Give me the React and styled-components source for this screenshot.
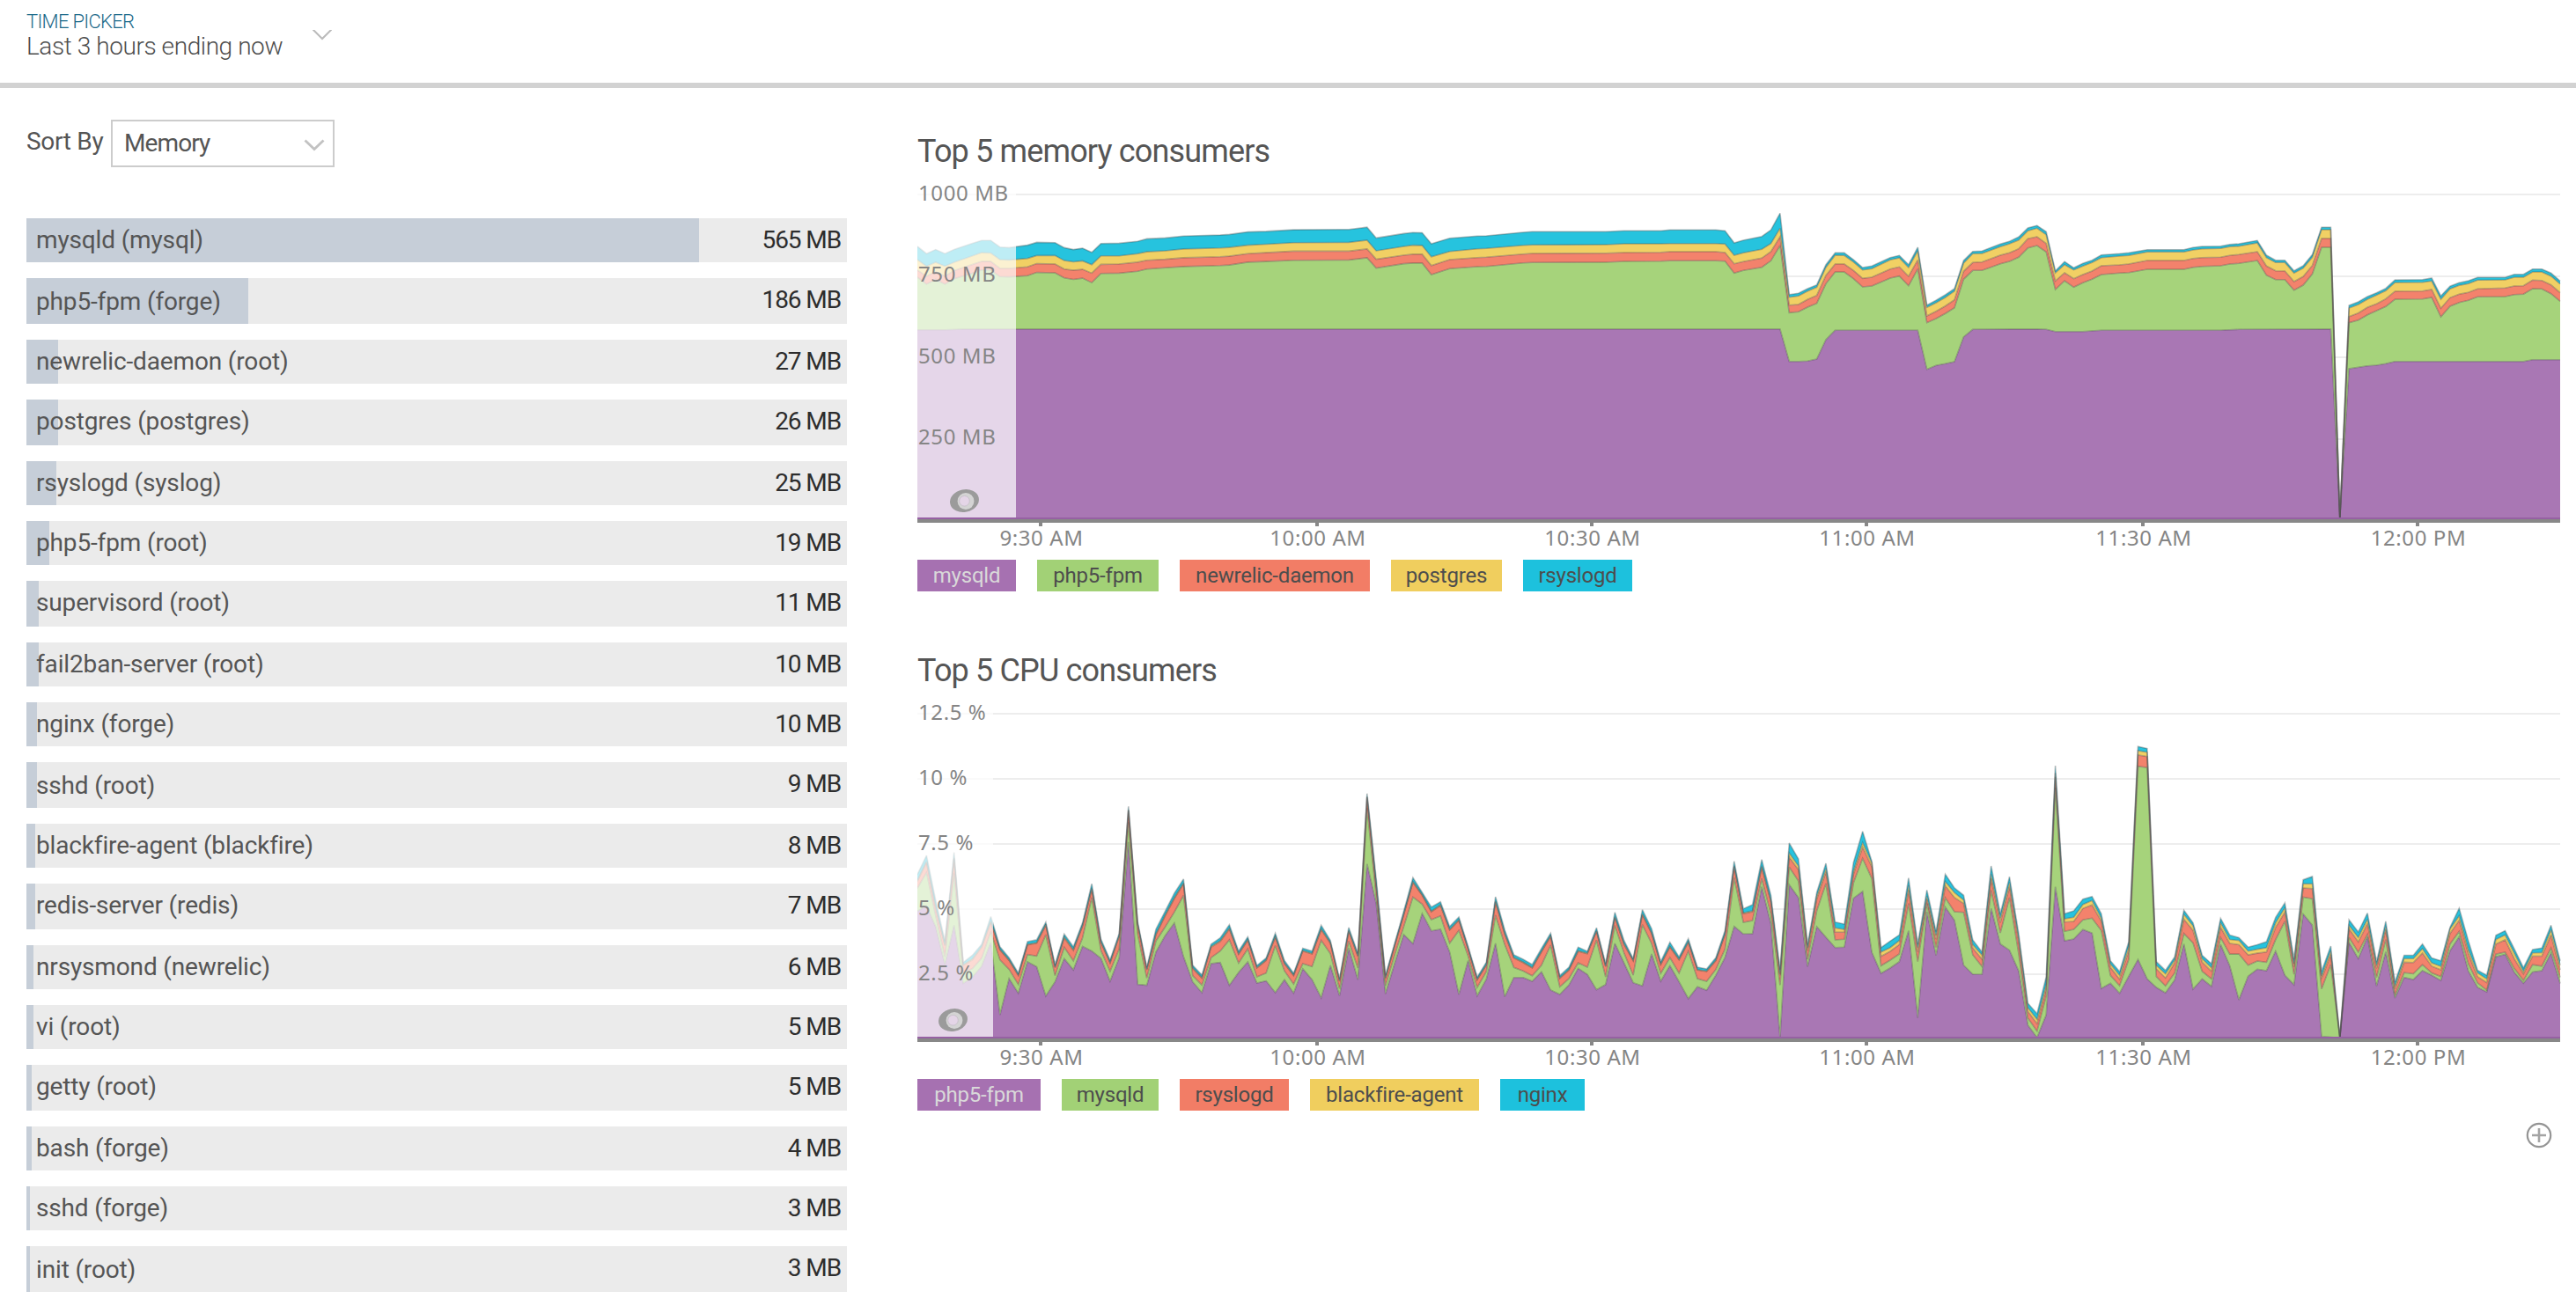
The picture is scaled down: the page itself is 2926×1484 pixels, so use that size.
import React from 'react';
import styled, { createGlobalStyle } from 'styled-components';

const GlobalStyle = createGlobalStyle`
  html, body { margin: 0; padding: 0; background: #fff; }
  body { font-family: Roboto, "Liberation Sans", sans-serif; color: #555; overflow: hidden; }
  * { box-sizing: border-box; }
`;

const Page = styled.div`
  width: 2926px;
  height: 1484px;
  background: #fff;
  display: flex;
  flex-direction: column;
`;

const Header = styled.header`
  height: 100px;
  border-bottom: 6px solid #d2d2d2;
  padding: 12px 30px 0;
  display: flex;
  align-items: flex-start;
  flex: none;
`;

const Picker = styled.div`
  width: 325px;
  font-weight: 300;
`;

const PickerTitle = styled.div`
  font-size: 22px;
  line-height: 25px;
  letter-spacing: -0.7px;
  color: #1c6a8a;
`;

const PickerValue = styled.div`
  font-size: 28px;
  line-height: 31px;
  letter-spacing: -0.42px;
  color: #4d4d4d;
`;

const PickerArrow = styled.svg`
  width: 22px;
  height: 12px;
  margin-top: 22px;
`;

const Body = styled.main`
  display: flex;
  flex: 1;
  padding-left: 30px;
`;

const Sidebar = styled.section`
  width: 932px;
  margin-right: 80px;
  padding-top: 36px;
`;

const SortBar = styled.div`
  display: flex;
  height: 54px;
  margin-bottom: 58px;
  font-size: 28px;
  line-height: 49px;
`;

const SortLabel = styled.label`
  width: 96px;
  letter-spacing: -0.3px;
`;

const Select = styled.div`
  width: 254px;
  height: 54px;
  border: 2px solid #ccc;
  display: flex;
  justify-content: space-between;
  padding: 0 9px 0 13px;
  letter-spacing: -0.9px;
`;

const SelectArrow = styled.svg`
  width: 24px;
  height: 14px;
  margin-top: 20px;
  overflow: visible;
`;

const Row = styled.div`
  height: ${(p) => p.$height}px;
  margin-bottom: ${(p) => p.$gap}px;
  padding: 0 7px 0 11px;
  display: flex;
  justify-content: space-between;
  font-size: 28px;
  line-height: 49px;
  white-space: nowrap;
  background: linear-gradient(#c6ced8, #c6ced8) 0 0 / ${(p) => p.$fill}px 100% no-repeat #ebebeb;
`;

const RowName = styled.span`
  letter-spacing: -0.15px;
  padding-top: ${(p) => p.$drop}px;
`;

const RowValue = styled.span`
  color: #2d2d2d;
  letter-spacing: -1.1px;
`;

const Charts = styled.section`
  width: 1868px;
  padding-top: 50px;
`;

const ChartBlock = styled.article`
  margin-bottom: 68px;
`;

const ChartTitle = styled.h2`
  margin: 0 0 6px;
  font-weight: 400;
  font-size: 36px;
  line-height: 44px;
  letter-spacing: -0.85px;
`;

const Plot = styled.svg`
  display: block;
  width: 1868px;
  height: 430px;
  margin-bottom: 6px;
  text {
    font-family: "Noto Sans", "Open Sans", sans-serif;
    font-size: 24px;
    letter-spacing: 0.6px;
    fill: #858585;
  }
`;

const Legend = styled.div`
  display: flex;
  gap: 24px;
`;

const LegendItem = styled.span`
  width: ${(p) => p.$width}px;
  height: 36px;
  background: ${(p) => p.$color};
  color: ${(p) => (p.$light ? '#d9d9d9' : '#4d4d4d')};
  font-size: 24px;
  line-height: 36px;
  letter-spacing: -0.2px;
  text-align: center;
  white-space: nowrap;
`;

const AddBar = styled.div`
  display: flex;
  justify-content: flex-end;
  padding-right: 11px;
  margin-top: -55px;
`;

const AddIcon = styled.svg`
  width: 30px;
  height: 30px;
`;

const processes = [
  ['mysqld (mysql)', '565 MB', 764],
  ['php5-fpm (forge)', '186 MB', 252],
  ['newrelic-daemon (root)', '27 MB', 36],
  ['postgres (postgres)', '26 MB', 36],
  ['rsyslogd (syslog)', '25 MB', 34],
  ['php5-fpm (root)', '19 MB', 26],
  ['supervisord (root)', '11 MB', 14],
  ['fail2ban-server (root)', '10 MB', 14],
  ['nginx (forge)', '10 MB', 12],
  ['sshd (root)', '9 MB', 12],
  ['blackfire-agent (blackfire)', '8 MB', 10],
  ['redis-server (redis)', '7 MB', 10],
  ['nrsysmond (newrelic)', '6 MB', 8],
  ['vi (root)', '5 MB', 8],
  ['getty (root)', '5 MB', 6],
  ['bash (forge)', '4 MB', 6],
  ['sshd (forge)', '3 MB', 4],
  ['init (root)', '3 MB', 4],
];

// Rows repeat every 34.375 units and snap to whole units, two pixels each.
const PITCH = 34.375;
const snap = (v) => Math.round(v) * 2;

const COLORS = ['#a671b1', '#a2d176', '#f27d66', '#f0ce5e', '#1dc1dd'];
const LAST = 179;
const STEP = 1866 / LAST;
const ZERO = 391;
const PLOT = 370;

// Each segment lists stacked tops measured down from a local origin:
// `zero` is the baseline and `full` the height of the whole scale.
const cpuSegments = [
  {
    zero: 1262.8, full: 1036,
    rows: [
      [855, 782, 760, 757, 738], [838, 732, 700, 697, 678], [905, 870, 845, 842, 820], [1025, 1000, 965, 962, 950],
      [900, 735, 690, 686, 668], [1085, 1050, 1027, 1025, 1018], [1065, 1038, 1010, 1007, 995], [1030, 1005, 970, 967, 960],
      [955, 920, 890, 887, 872], [1185, 1010, 978, 976, 968], [1070, 1040, 1012, 1010, 1003], [1116, 1088, 1060, 1058, 1052],
      [1016, 993, 962, 960, 952], [1032, 998, 957, 955, 946], [1125, 930, 900, 897, 890], [1080, 1060, 1035, 1033, 1025],
      [1006, 970, 940, 937, 928], [1042, 1013, 980, 977, 968], [967, 940, 903, 900, 892], [982, 812, 785, 782, 768],
      [1005, 980, 955, 952, 944], [1078, 1046, 1020, 1018, 1010], [1003, 975, 935, 932, 925], [635, 572, 535, 532, 522],
      [1088, 928, 898, 895, 888], [1091, 1068, 1042, 1040, 1033], [985, 950, 930, 927, 912], [933, 905, 870, 867, 855],
      [893, 858, 815, 812, 798], [1000, 805, 768, 765, 753], [1080, 1060, 1037, 1035, 1027], [1114, 1090, 1068, 1066, 1058],
      [1022, 1003, 970, 967, 960], [1018, 982, 952, 949, 940], [1091, 946, 912, 909, 898], [1050, 1020, 992, 990, 982],
      [1016, 975, 947, 945, 937], [1084, 1064, 1036, 1034, 1028], [1077, 1052, 1012, 1010, 1004], [1114, 965, 938, 935, 925],
      [1073, 1045, 1022, 1020, 1012], [1116, 1087, 1060, 1058, 1052], [1038, 1022, 982, 980, 973], [1073, 1031, 991, 989, 982],
      [1131, 948, 914, 911, 900], [1028, 990, 957, 955, 948],
    ],
  },
  {
    zero: 1203, full: 1110,
    rows: [
      [1054, 1030, 1005, 1003, 997], [892, 868, 835, 832, 822], [1000, 960, 920, 918, 910], [605, 415, 378, 375, 365],
      [740, 715, 680, 677, 655], [1048, 1020, 995, 993, 985], [945, 915, 885, 883, 876], [846, 818, 778, 776, 766],
      [877, 718, 668, 665, 652], [774, 742, 712, 710, 702], [833, 795, 768, 766, 752], [828, 782, 747, 744, 734],
      [905, 875, 830, 828, 818], [1050, 832, 797, 795, 786], [935, 918, 895, 893, 885], [1055, 1026, 1000, 998, 991],
      [998, 972, 950, 948, 940], [876, 780, 735, 732, 717], [1058, 880, 845, 842, 830], [992, 958, 926, 924, 915],
      [992, 970, 941, 939, 930], [1005, 986, 960, 958, 948], [973, 950, 905, 903, 893], [1035, 882, 852, 850, 841],
      [1050, 1024, 995, 993, 986], [1018, 996, 967, 965, 957], [961, 942, 903, 901, 889], [982, 957, 911, 909, 903],
      [1034, 865, 835, 833, 823], [1016, 990, 955, 953, 945], [876, 815, 788, 785, 770], [943, 908, 880, 877, 866],
      [1010, 984, 935, 934, 928], [1021, 812, 778, 775, 761], [912, 876, 842, 840, 826], [1005, 978, 948, 946, 938],
      [952, 924, 888, 886, 872], [1007, 977, 932, 930, 922], [1064, 902, 872, 870, 860], [1024, 996, 967, 965, 957],
      [1036, 1005, 972, 970, 963], [985, 965, 935, 933, 925], [924, 895, 845, 843, 832], [818, 652, 615, 612, 596],
      [844, 804, 775, 772, 758], [843, 798, 768, 765, 744], [683, 655, 616, 612, 590], [810, 775, 735, 730, 712],
      [1197, 1018, 985, 980, 965], [676, 616, 582, 568, 534], [720, 663, 625, 612, 588], [955, 930, 900, 892, 880],
      [819, 765, 725, 715, 702], [855, 672, 632, 620, 603], [890, 864, 838, 823, 803], [889, 862, 838, 828, 810],
      [722, 670, 640, 630, 600], [699, 586, 548, 532, 494], [907, 655, 615, 602, 597], [978, 952, 920, 905, 890],
      [960, 933, 903, 890, 868], [938, 912, 880, 866, 847], [833, 740, 695, 678, 653], [1130, 938, 905, 890, 878],
      [768, 740, 725, 715, 694], [917, 890, 862, 848, 835], [752, 720, 680, 665, 640], [797, 768, 720, 703, 687],
      [950, 770, 740, 728, 712], [981, 915, 892, 880, 864], [982, 955, 930, 916, 905], [757, 695, 655, 640, 612],
      [878, 840, 805, 790, 775], [899, 720, 683, 668, 649], [970, 910, 872, 858, 842], [1155, 1130, 1108, 1095, 1080],
      [1197, 1175, 1150, 1135, 1115], [1120, 1055, 1030, 1015, 990], [683, 345, 308, 295, 270], [867, 835, 803, 792, 775],
      [861, 828, 801, 787, 765], [829, 796, 757, 743, 725], [841, 790, 745, 730, 716], [1030, 832, 800, 790, 775],
      [1012, 985, 958, 946, 935], [1046, 1020, 998, 985, 972], [988, 930, 900, 885, 870], [931, 272, 234, 219, 205],
    ],
  },
  {
    zero: 1164.4, full: 1074.5,
    rows: [
      [965, 268, 231, 217, 205], [993, 957, 932, 920, 908], [1011, 988, 962, 948, 937], [968, 945, 912, 902, 892],
      [850, 815, 768, 752, 738], [999, 846, 805, 790, 780], [965, 940, 910, 898, 887], [990, 965, 940, 928, 915],
      [852, 828, 795, 780, 765], [922, 883, 848, 835, 820], [1034, 883, 852, 838, 829], [956, 920, 886, 873, 860],
      [933, 906, 880, 867, 852], [938, 910, 876, 862, 842], [873, 835, 795, 780, 762], [953, 775, 745, 730, 714],
      [984, 950, 925, 915, 900], [751, 695, 665, 651, 638], [788, 700, 667, 651, 627], [1155, 998, 965, 955, 940],
      [1157, 918, 885, 872, 857], [1160, 1160, 1159, 1158, 1156], [845, 828, 800, 788, 770], [898, 877, 843, 828, 810],
      [827, 818, 783, 768, 748], [988, 960, 930, 920, 908], [876, 835, 803, 792, 775], [1028, 1018, 998, 988, 975],
      [960, 944, 910, 898, 887], [967, 948, 911, 898, 887], [938, 918, 880, 865, 850], [953, 945, 923, 912, 896],
      [970, 957, 935, 923, 905], [872, 850, 815, 800, 795], [826, 808, 772, 757, 732], [940, 915, 882, 868, 840],
      [993, 978, 958, 945, 936], [1008, 1002, 977, 965, 953], [892, 883, 850, 835, 821], [884, 877, 836, 820, 806],
      [943, 930, 898, 880, 866], [979, 970, 948, 940, 928], [942, 918, 890, 879, 868], [938, 923, 890, 878, 863],
      [880, 863, 820, 803, 788], [980, 960, 935, 920, 905],
    ],
  },
];

const cpuTops = cpuSegments.flatMap(({ zero, full, rows }) =>
  rows.map((row) => row.map((v) => ZERO - ((zero - v) / full) * PLOT)),
);

// Memory samples are sparse: [sample, rsyslogd, postgres, newrelic-daemon, php5-fpm].
const memorySegments = [
  {
    zero: 1290.8, full: 1036,
    rows: [
      [0, 420, 462, 495, 518], [1, 443, 483, 515, 540], [2, 430, 470, 500, 525], [3, 443, 483, 515, 540], [4, 430, 470, 497, 523],
      [6, 410, 450, 477, 505], [7, 401, 440, 468, 495], [8, 401, 441, 468, 495], [9, 422, 462, 490, 516], [10, 424, 463, 490, 517],
      [12, 416, 458, 485, 513], [13, 407, 449, 475, 503], [15, 408, 449, 476, 504], [16, 424, 465, 492, 520], [17, 430, 469, 496, 525],
      [18, 426, 466, 493, 521], [19, 439, 478, 505, 535], [20, 411, 450, 477, 506], [22, 410, 450, 476, 505], [24, 404, 443, 470, 499],
      [25, 396, 437, 464, 492], [27, 393, 434, 461, 488], [29, 387, 428, 456, 484], [33, 384, 425, 453, 481], [34, 382, 423, 451, 479],
      [36, 374, 416, 443, 470], [38, 372, 413, 440, 468], [41, 367, 408, 435, 464], [47, 366, 407, 435, 463], [49, 359, 400, 428, 456],
      [50, 393, 434, 461, 489], [53, 379, 420, 448, 475], [54, 376, 416, 445, 473], [55, 377, 417, 445, 473], [56, 412, 453, 481, 510],
    ],
  },
  {
    zero: 1173, full: 1110,
    rows: [
      [58, 212, 257, 285, 316], [61, 205, 248, 278, 309], [62, 204, 247, 277, 308], [66, 192, 236, 266, 296], [67, 190, 235, 264, 295],
      [75, 190, 234, 263, 294], [77, 187, 231, 261, 291], [81, 187, 231, 260, 290], [82, 184, 230, 258, 289], [87, 184, 230, 258, 289],
      [88, 187, 232, 261, 290], [89, 228, 270, 299, 331], [90, 219, 262, 292, 322], [92, 206, 250, 280, 311], [93, 184, 230, 258, 289],
      [94, 127, 178, 207, 237], [95, 404, 413, 440, 466], [96, 400, 409, 438, 463], [97, 384, 392, 421, 447], [98, 371, 379, 407, 434],
      [99, 302, 311, 339, 367], [100, 262, 270, 300, 327], [101, 262, 271, 300, 327], [102, 285, 293, 322, 350], [103, 312, 320, 349, 378],
      [104, 307, 316, 345, 375], [106, 278, 286, 317, 348], [107, 271, 279, 310, 341], [108, 302, 312, 342, 374], [109, 243, 255, 286, 317],
      [110, 440, 448, 477, 500], [111, 424, 432, 461, 486], [112, 405, 414, 443, 469], [113, 384, 392, 422, 449], [114, 288, 297, 325, 352],
      [115, 257, 265, 295, 322], [116, 256, 264, 293, 322], [118, 232, 241, 270, 299], [119, 223, 231, 262, 291], [120, 208, 218, 248, 277],
      [121, 177, 187, 214, 245], [122, 169, 178, 207, 237], [123, 190, 200, 230, 259], [124, 323, 330, 358, 387], [125, 292, 302, 330, 357],
      [126, 313, 320, 350, 379], [127, 298, 307, 336, 364], [128, 287, 295, 324, 352], [129, 269, 278, 306, 336], [131, 265, 273, 303, 331],
      [132, 262, 271, 300, 329], [134, 251, 259, 288, 318], [138, 251, 259, 288, 318], [139, 244, 252, 281, 311], [140, 240, 248, 278, 308],
      [142, 239, 247, 277, 306], [143, 233, 241, 271, 300], [144, 231, 239, 268, 298], [146, 220, 228, 258, 288], [147, 270, 278, 307, 338],
      [148, 287, 295, 323, 353], [149, 287, 295, 324, 353], [150, 323, 331, 360, 389], [151, 306, 314, 343, 372], [152, 268, 277, 305, 334],
      [153, 175, 183, 213, 243], [154, 175, 183, 213, 243], [155, 1168, 1168, 1168, 1168], [156, 441, 450, 479, 500], [157, 429, 438, 467, 491],
      [158, 411, 420, 448, 473], [159, 398, 406, 436, 459], [160, 383, 391, 419, 445], [161, 354, 363, 393, 420], [164, 353, 362, 392, 419],
      [165, 348, 358, 387, 414], [166, 409, 420, 451, 480], [167, 376, 385, 415, 444], [168, 364, 373, 403, 431], [169, 357, 367, 397, 424],
      [170, 346, 355, 385, 412], [173, 346, 354, 382, 411], [174, 335, 345, 375, 404], [175, 335, 345, 374, 403], [176, 317, 327, 355, 384],
      [177, 317, 327, 356, 385], [178, 331, 341, 371, 401], [179, 358, 368, 398, 427],
    ],
  },
];

const mysqlMemory = [
  [0, 524], [3, 524], [5, 522], [94, 522], [95, 632], [96, 632], [97, 631], [98, 624], [99, 558], [100, 526], [109, 526],
  [110, 659], [111, 646], [112, 640], [113, 633], [114, 549], [115, 523], [122, 522], [123, 523], [124, 530], [127, 530],
  [129, 526], [142, 526], [144, 523], [154, 522], [155, 1168], [156, 657], [158, 647], [159, 645], [160, 640], [161, 632],
  [175, 632], [176, 626], [179, 626],
];

const toPlot = (zero, full) => (v) => ZERO - ((zero - v) / full) * PLOT;

const memoryPoints = memorySegments.flatMap(({ zero, full, rows }) =>
  rows.map(([i, ...tops]) => [i, ...tops.map(toPlot(zero, full))]),
);

const xOf = (i) => +(i * STEP).toFixed(1);
const point = ([i, y]) => `${xOf(i)},${y.toFixed(1)}`;

const memoryLines = [
  mysqlMemory.map(([i, v]) => [i, toPlot(1173, 1110)(v)]),
  memoryPoints.map((p) => [p[0], p[4]]),
  memoryPoints.map((p) => [p[0], p[3]]),
  memoryPoints.map((p) => [p[0], p[2]]),
  memoryPoints.map((p) => [p[0], p[1]]),
];

const cpuLines = [0, 1, 2, 3, 4].map((layer) => cpuTops.map((row, i) => [i, row[layer]]));

const ticks = [
  [140, '9:30 AM'], [454, '10:00 AM'], [766, '10:30 AM'], [1078, '11:00 AM'], [1392, '11:30 AM'], [1704, '12:00 PM'],
];

function StackedChart({ lines, labels, shade }) {
  const band = (i) => {
    const upper = lines[i].map(point).join(' ');
    const lower = i === 0 ? `1866,${ZERO} 0,${ZERO}` : [...lines[i - 1]].reverse().map(point).join(' ');
    return `${upper} ${lower}`;
  };
  const gap = PLOT / labels.length;
  return (
    <Plot viewBox="0 0 1868 430">
      {labels.map((label, i) => (
        <rect key={label} x="0" y={Math.round(20 + i * gap)} width="1866" height="2" fill="#ededed" />
      ))}
      {lines.map((_, i) => (
        <polygon key={i} points={band(i)} fill={COLORS[i]} fillOpacity="0.96" />
      ))}
      {lines.map((line, i) => (
        <polyline key={i} points={line.map(point).join(' ')} fill="none" stroke="#4a4a4a" strokeOpacity="0.36" strokeWidth="1.6" strokeMiterlimit="3" />
      ))}
      <rect x="0" y="388" width="1866" height="2" fill="#9661a3" />
      <rect x="0" y="0" width={shade} height="388" fill="#fff" fillOpacity="0.7" />
      <rect x="0" y="390" width="1866" height="4" fill="#888" />
      <g transform={`translate(${shade / 2 - 2.5} 369)`}>
        <ellipse rx="16.6" ry="12.8" fill="#9b9b9b" transform="rotate(-12)" />
        <circle cx="1.5" cy="0.5" r="9.4" fill="#d4d4d4" />
        <circle cx="0" cy="0.3" r="5.8" fill="#e4d5e7" stroke="#c4bcc6" strokeWidth="0.8" />
      </g>
      {labels.map((label, i) => (
        <text key={label} x="1" y={27.8 + i * gap}>{label}</text>
      ))}
      {ticks.map(([x, label]) => (
        <g key={label}>
          <rect x={x - 2} y="394" width="4" height="4" fill="#888" />
          <text x={x + 1} y="420" textAnchor="middle">{label}</text>
        </g>
      ))}
    </Plot>
  );
}

function Chart({ title, legend, ...plot }) {
  return (
    <ChartBlock>
      <ChartTitle>{title}</ChartTitle>
      <StackedChart {...plot} />
      <Legend>
        {legend.map(([name, width], i) => (
          <LegendItem key={name} $width={width} $color={COLORS[i]} $light={i === 0}>{name}</LegendItem>
        ))}
      </Legend>
    </ChartBlock>
  );
}

export default function App() {
  return (
    <Page>
      <GlobalStyle />
      <Header>
        <Picker>
          <PickerTitle>TIME PICKER</PickerTitle>
          <PickerValue>Last 3 hours ending now</PickerValue>
        </Picker>
        <PickerArrow viewBox="0 0 22 12">
          <path d="M0.5 -0.5 L11 10 L21.5 -0.5" fill="none" stroke="#bbb" strokeWidth="2" />
        </PickerArrow>
      </Header>
      <Body>
        <Sidebar>
          <SortBar>
            <SortLabel>Sort By</SortLabel>
            <Select>
              Memory
              <SelectArrow viewBox="0 0 24 14">
                <path d="M1.5 1.5 L12 11.5 L22.5 1.5" fill="none" stroke="#c2c2c2" strokeWidth="2.8" />
              </SelectArrow>
            </Select>
          </SortBar>
          {processes.map(([name, value, fill], k) => {
            const top = 124 + k * PITCH;
            const start = snap(top);
            const end = snap(top + 25.375);
            return (
              <Row key={name} $height={end - start} $gap={snap(top + PITCH) - end} $fill={fill}>
                <RowName $drop={top % 1 === 0.375 ? 2 : 0}>{name}</RowName>
                <RowValue>{value}</RowValue>
              </Row>
            );
          })}
        </Sidebar>
        <Charts>
          <Chart
            title="Top 5 memory consumers"
            lines={memoryLines}
            labels={['1000 MB', '750 MB', '500 MB', '250 MB']}
            shade={112}
            legend={[['mysqld', 112], ['php5-fpm', 138], ['newrelic-daemon', 216], ['postgres', 126], ['rsyslogd', 124]]}
          />
          <Chart
            title="Top 5 CPU consumers"
            lines={cpuLines}
            labels={['12.5 %', '10 %', '7.5 %', '5 %', '2.5 %']}
            shade={86}
            legend={[['php5-fpm', 140], ['mysqld', 110], ['rsyslogd', 124], ['blackfire-agent', 192], ['nginx', 96]]}
          />
          <AddBar>
            <AddIcon viewBox="0 0 30 30">
              <circle cx="15" cy="15" r="13.2" fill="none" stroke="#959595" strokeWidth="2.2" />
              <path d="M15 7 V23 M7 15 H23" fill="none" stroke="#a4a4a4" strokeWidth="2.6" />
            </AddIcon>
          </AddBar>
        </Charts>
      </Body>
    </Page>
  );
}
